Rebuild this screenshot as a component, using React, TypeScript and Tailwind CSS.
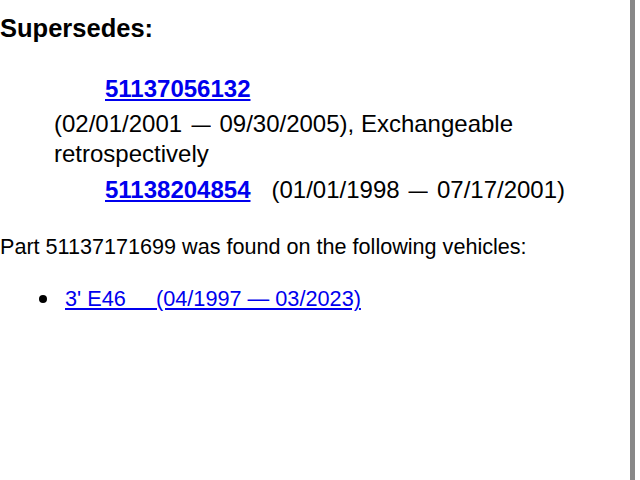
function Dash() {
  return <span className="inline-block scale-x-[0.8]">—</span>;
}

export default function App() {
  return (
    <div className="relative w-[640px] h-[480px] bg-white overflow-hidden text-black" style={{ fontFamily: '"Liberation Sans", Arial, sans-serif' }}>
      <div className="absolute top-0 bottom-0 left-[630px] w-[5px] bg-[#888888]" />
      <div className="w-[630px] pt-[14px]">
        <h3 className="text-[25.5px] leading-[28px] font-bold">Supersedes:</h3>
        <div className="mt-[32px] pl-[54px] pr-[40px]">
          <div className="pl-[51px] text-[24px] leading-[30px]">
            <a href="#" className="font-bold text-[#0000ee] underline">51137056132</a>
          </div>
          <div className="mt-[5px] text-[24px] leading-[30px]">
            (02/01/2001 <Dash /> 09/30/2005), Exchangeable
            <br />
            retrospectively
          </div>
          <div className="pl-[51px] text-[24px] leading-[30px] mt-[6px] whitespace-nowrap">
            <a href="#" className="font-bold text-[#0000ee] underline">51138204854</a>
            <span className="ml-[21px]">(01/01/1998 <Dash /> 07/17/2001)</span>
          </div>
        </div>
        <p className="mt-[30px] text-[21.6px] leading-[24px]">Part 51137171699 was found on the following vehicles:</p>
        <div className="mt-[28px] flex items-center text-[21.7px] leading-[24px]">
          <span className="ml-[39px] w-[8px] h-[8px] rounded-full bg-black" />
          <a href="#" className="ml-[18px] text-[#0000ee] underline whitespace-pre">
            3' E46     (04/1997 — 03/2023)
          </a>
        </div>
      </div>
    </div>
  );
}
